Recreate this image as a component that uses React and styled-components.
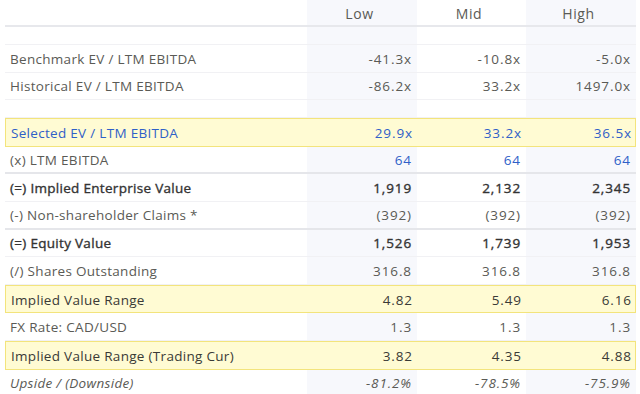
import React from 'react';
import styled, { createGlobalStyle } from 'styled-components';

const GlobalStyle = createGlobalStyle`
  html, body {
    margin: 0;
    padding: 0;
    background: #fff;
  }
  body {
    font-family: 'Open Sans', 'Liberation Sans', sans-serif;
  }
`;

const Table = styled.div`
  width: 631px;
  margin-left: 5px;
  display: flex;
  flex-direction: column;
`;

const Row = styled.div`
  display: grid;
  grid-template-columns: 302px 110px 109px 110px;
  box-sizing: border-box;
  height: ${p => (p.$spacer ? '18px' : p.$header ? '27px' : '27.6px')};
  border-bottom: ${p =>
    p.$header ? '2px solid #e7e8ec' : p.$strong ? '2px solid #e5e6ea' : '1px solid #f1f1f4'};
  ${p =>
    p.$highlight &&
    `
    background: #fffbd3;
    border: 1px solid #f3e47c;
    height: 28.6px;
  `}
`;

const Cell = styled.div`
  display: flex;
  align-items: center;
  justify-content: ${p => (p.$center ? 'center' : p.$label ? 'flex-start' : 'flex-end')};
  padding: ${p => (p.$label ? '1px 0 0 5px' : '1px 5px 0 0')};
  font-size: ${p => (p.$center ? '14px' : '13.5px')};
  letter-spacing: ${p => (p.$center ? '0.6px' : p.$label ? '0.3px' : '0.9px')};
  color: ${p => (p.$blue ? '#2f60c8' : p.$bold ? '#333333' : '#5a5a55')};
  font-weight: 400;
  -webkit-text-stroke: ${p => (p.$bold ? '0.35px #333333' : '0')};
  font-style: ${p => (p.$italic ? 'italic' : 'normal')};
  background: ${p => (p.$shade && !p.$hl ? '#f7f8fc' : 'transparent')};
  white-space: nowrap;
`;

const Text = styled.span`
  color: ${p => (p.$dark ? '#3a3a36' : 'inherit')};
`;

const rows = [
  { label: 'Benchmark EV / LTM EBITDA', v: ['-41.3x', '-10.8x', '-5.0x'] },
  { label: 'Historical EV / LTM EBITDA', v: ['-86.2x', '33.2x', '1497.0x'] },
  { spacer: true },
  { label: 'Selected EV / LTM EBITDA', v: ['29.9x', '33.2x', '36.5x'], highlight: true, blue: true },
  { label: '(x) LTM EBITDA', v: ['64', '64', '64'], blueValues: true, strong: true },
  { label: '(=) Implied Enterprise Value', v: ['1,919', '2,132', '2,345'], bold: true },
  { label: '(-) Non-shareholder Claims *', v: ['(392)', '(392)', '(392)'], strong: true },
  { label: '(=) Equity Value', v: ['1,526', '1,739', '1,953'], bold: true },
  { label: '(/) Shares Outstanding', v: ['316.8', '316.8', '316.8'] },
  { label: 'Implied Value Range', v: ['4.82', '5.49', '6.16'], highlight: true, dark: true },
  { label: 'FX Rate: CAD/USD', v: ['1.3', '1.3', '1.3'] },
  { label: 'Implied Value Range (Trading Cur)', v: ['3.82', '4.35', '4.88'], highlight: true, dark: true },
  { label: 'Upside / (Downside)', v: ['-81.2%', '-78.5%', '-75.9%'], italic: true },
];

const EmptyRow = () => (
  <Row $spacer>
    <Cell $label />
    <Cell $shade />
    <Cell />
    <Cell $shade />
  </Row>
);

export default function App() {
  return (
    <>
      <GlobalStyle />
      <Table>
        <Row $header>
          <Cell $label />
          <Cell $center $shade>Low</Cell>
          <Cell $center>Mid</Cell>
          <Cell $center $shade>High</Cell>
        </Row>
        <EmptyRow />
        {rows.map((r, i) =>
          r.spacer ? (
            <EmptyRow key={i} />
          ) : (
            <Row key={i} $highlight={r.highlight} $strong={r.strong}>
              <Cell $label $blue={r.blue} $bold={r.bold} $italic={r.italic}>
                <Text $dark={r.dark}>{r.label}</Text>
              </Cell>
              {r.v.map((val, j) => (
                <Cell
                  key={j}
                  $shade={j !== 1}
                  $hl={r.highlight}
                  $blue={r.blue || r.blueValues}
                  $bold={r.bold}
                  $italic={r.italic}
                >
                  <Text $dark={r.dark}>{val}</Text>
                </Cell>
              ))}
            </Row>
          )
        )}
      </Table>
    </>
  );
}
